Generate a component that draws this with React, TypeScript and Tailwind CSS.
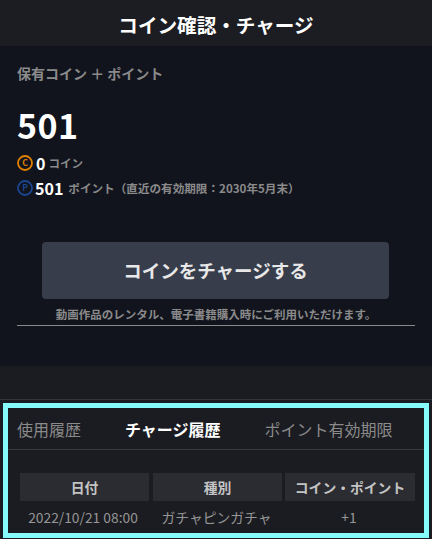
import React from "react";

const Badge = ({ letter, color }: { letter: string; color: string }) => (
  <svg viewBox="0 0 16 16" className="h-4 w-4 shrink-0" fill="none" stroke={color}>
    <circle cx="8" cy="8" r="7" strokeWidth={1.8} />
    <text x="8" y="11" textAnchor="middle" fontSize="8.5" fontWeight="700" fill={color} stroke="none">
      {letter}
    </text>
  </svg>
);

export default function App() {
  return (
    <div className="h-[539px] w-[432px] overflow-hidden bg-[#1b1c21] font-['Noto_Sans_CJK_JP',sans-serif] text-white">
      <header className="flex h-[46px] items-center justify-center bg-[#1c1d22] pt-[3px] text-[19.6px] font-bold">
        コイン確認・チャージ
      </header>

      <section className="h-[320px] bg-[#11141d] px-[17px]">
        <p className="pt-[17px] text-[14px] leading-[20px] font-bold text-[#8a8a8a]">保有コイン ＋ ポイント</p>
        <p className="mt-[18px] text-[34px] leading-[48px] font-bold tracking-[0.5px]">501</p>
        <div className="mt-[4px] flex h-[20px] items-center">
          <Badge letter="C" color="#e08000" />
          <span className="ml-[3px] text-[16px] font-bold">0</span>
          <span className="mt-[2px] ml-[3px] text-[11.5px] font-bold text-[#8a8a8a]">コイン</span>
        </div>
        <div className="mt-[5px] flex h-[20px] items-center">
          <Badge letter="P" color="#1c4590" />
          <span className="ml-[2px] text-[16px] font-bold">501</span>
          <span className="mt-[2px] ml-[5px] text-[11.6px] font-bold text-[#8a8a8a]">ポイント（直近の有効期限：2030年5月末）</span>
        </div>

        <button className="mt-[44px] ml-[25px] flex h-[57px] w-[347px] items-center justify-center rounded-[4px] bg-[#383d4b] text-[18.5px] font-bold text-[#e8e8e8]">
          コインをチャージする
        </button>
        <p className="mt-[5px] border-b border-[#8a8a8a] pb-[1px] text-center text-[11.5px] leading-[20px] font-bold text-[#8a8a8a]">
          動画作品のレンタル、電子書籍購入時にご利用いただけます。
        </p>
      </section>

      <div className="h-[34px] border-b border-[#33343a]" />

      <section className="mx-[3px] mt-[3px] h-[135px] border-[5px] border-[#86fbfb] bg-[#1b1c21]">
        <div className="flex h-[42px] items-center border-b border-[#3a3b40] text-[16px] text-[#8a8a8a]">
          <span className="ml-[9px]">使用履歴</span>
          <span className="ml-[44px] font-bold text-white">チャージ履歴</span>
          <span className="ml-[44px]">ポイント有効期限</span>
        </div>
        <table className="mt-[23px] ml-[9px] w-[401px] table-fixed border-separate border-spacing-x-[3px] border-spacing-y-0 text-[13.8px]">
          <thead>
            <tr className="h-[28px] font-bold text-[#c4c4c4]">
              <th className="w-[130px] border-r border-[#1b1c21] bg-[#2b2c32]">日付</th>
              <th className="w-[129px] bg-[#2b2c32]">種別</th>
              <th className="w-[130px] bg-[#2b2c32]">コイン・ポイント</th>
            </tr>
          </thead>
          <tbody>
            <tr className="h-[33px] text-center text-[#969696]">
              <td className="pr-[4px]">2022/10/21 08:00</td>
              <td className="pr-[2px]">ガチャピンガチャ</td>
              <td className="pr-[2px]">+1</td>
            </tr>
          </tbody>
        </table>
      </section>
    </div>
  );
}
